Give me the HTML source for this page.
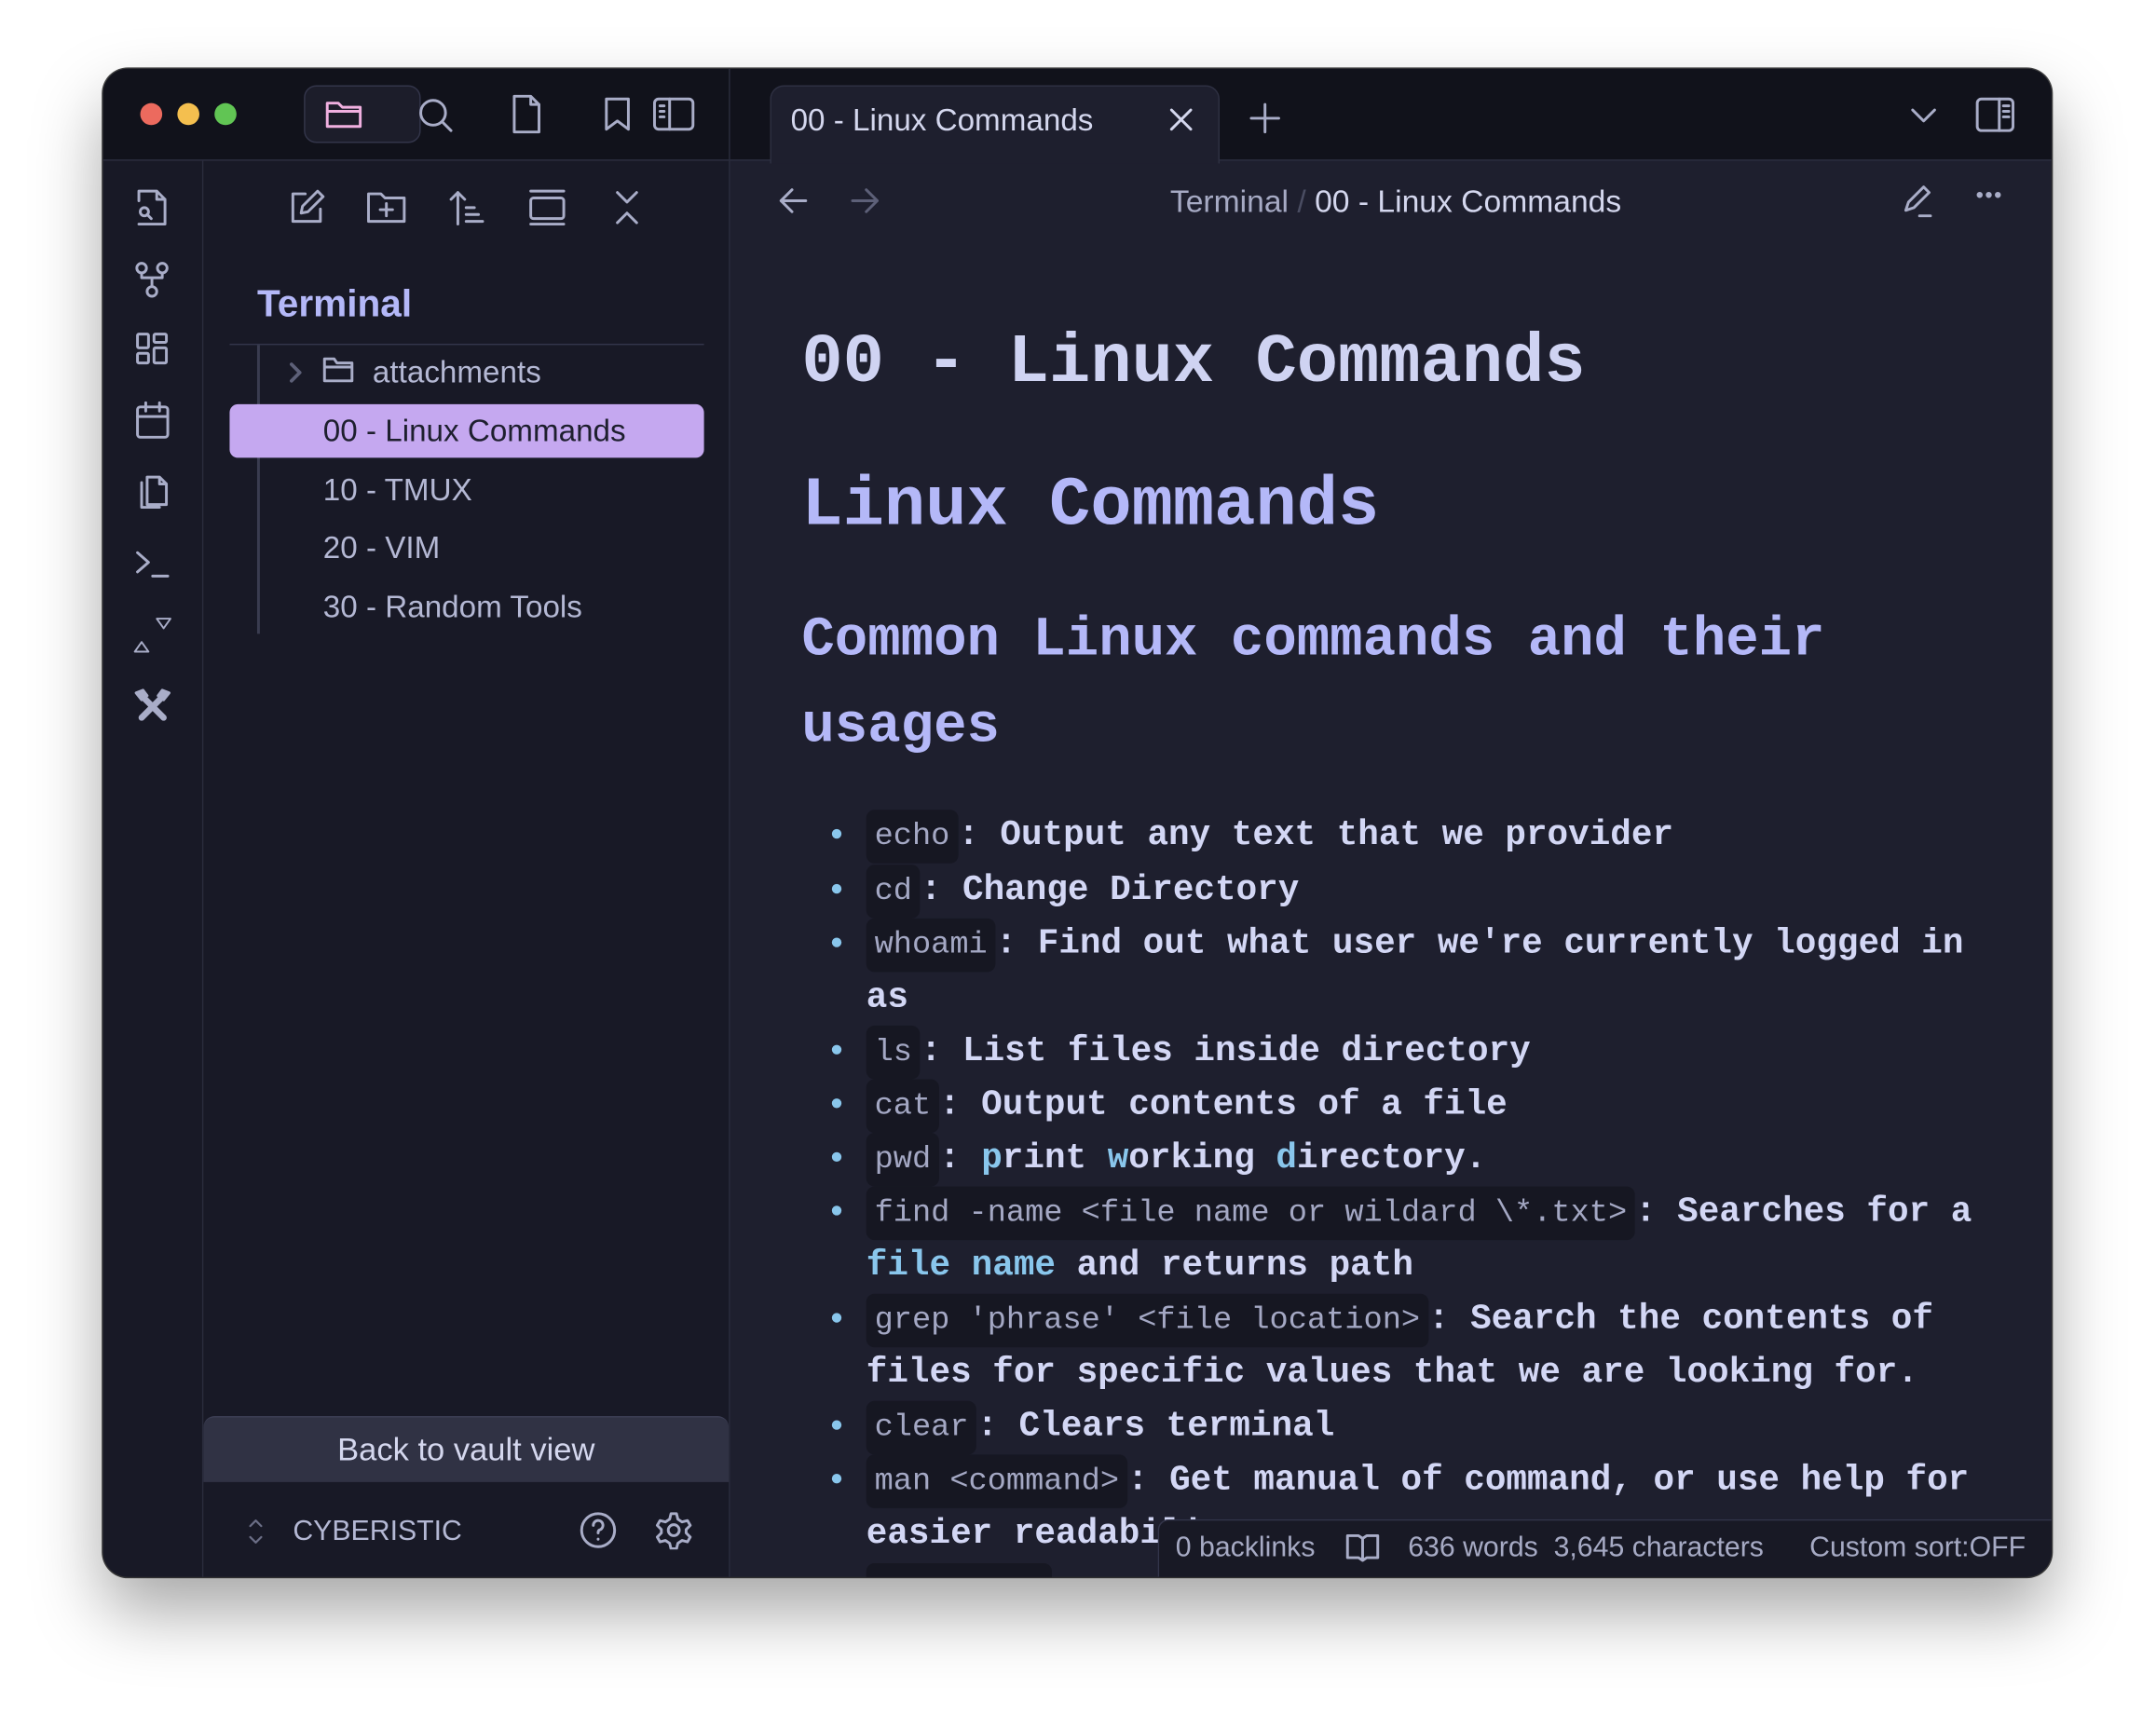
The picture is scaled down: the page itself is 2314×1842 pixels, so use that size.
<!DOCTYPE html>
<html><head><meta charset="utf-8">
<style>
html,body{margin:0;padding:0;background:#fff;width:2314px;height:1842px;overflow:hidden}
#s{position:absolute;left:0;top:0;width:1568px;height:1248px;transform:scale(1.47577);transform-origin:0 0;font-family:"Liberation Sans",sans-serif}
.a{position:absolute}
.win{left:75px;top:50px;width:1417px;height:1097px;border-radius:18px;background:#1e1f2e;overflow:hidden;box-shadow:0 25px 50px rgba(0,0,0,.35),0 0 0 1px #444;}
svg{position:absolute;fill:none;stroke:#a9adc8;stroke-width:2;stroke-linecap:round;stroke-linejoin:round}
.mono{font-family:"Liberation Mono",monospace}
.ln{position:absolute;left:630px;height:39px;line-height:39px;white-space:nowrap;font-family:"Liberation Mono",monospace;font-weight:bold;font-size:25.5px;color:#d3d7f5}
.c{font-weight:normal;font-size:22.8px;color:#a4a8c4;background:#161722;border-radius:6px;padding:0 6px;display:inline-block;line-height:39px}
.cy{color:#89c6ec}
.dot{position:absolute;left:605px;width:7px;height:7px;border-radius:50%;background:#89c6ec}
.tr{position:absolute;font-size:22.5px;color:#b4b8d4;white-space:nowrap}
</style></head><body>
<div id="s">
<div class="a win">
  <div class="a" style="left:0;top:0;width:1417px;height:66px;background:#11121b;border-bottom:1px solid #2e3042"></div>
  <div class="a" style="left:485px;top:12px;width:325px;height:56px;background:#1e1f2e;border:1px solid #2e3042;border-bottom:none;border-radius:10px 10px 0 0"></div>
  <div class="a" style="left:455px;top:0;width:1px;height:66px;background:#2a2c3c"></div>
  <div class="a" style="left:0;top:67px;width:72px;height:1030px;background:#181926;border-right:1px solid #2a2c3c"></div>
  <div class="a" style="left:73px;top:67px;width:382px;height:1030px;background:#181926;border-right:1px solid #2a2c3c"></div>
</div>
<div class="a" style="left:102px;top:75px;width:16px;height:16px;border-radius:50%;background:#ec6a5e"></div>
<div class="a" style="left:129px;top:75px;width:16px;height:16px;border-radius:50%;background:#f4bf4f"></div>
<div class="a" style="left:156px;top:75px;width:16px;height:16px;border-radius:50%;background:#61c554"></div>
<div class="a" style="left:221px;top:62px;width:85px;height:42px;border-radius:9px;background:#1c1d2a;border:1px solid #33354a;box-sizing:border-box"></div>
<svg style="left:236px;top:70px" width="28" height="26" viewBox="0 0 28 26"><path d="M2 5h8l3 3h13v14H2z M2 11h24" stroke="#f0b0e0"/></svg>
<svg style="left:303px;top:70px" width="28" height="28" viewBox="0 0 28 28"><circle cx="12" cy="12" r="9"/><path d="M19 19l6 6"/></svg>
<svg style="left:371px;top:68px" width="24" height="30" viewBox="0 0 24 30"><path d="M3 2h12l6 6v20H3z M15 2v6h6"/></svg>
<svg style="left:438px;top:70px" width="22" height="26" viewBox="0 0 22 26"><path d="M3 2h16v22l-8-6-8 6z"/></svg>
<svg style="left:474px;top:70px" width="32" height="26" viewBox="0 0 32 26"><rect x="2" y="2" width="28" height="22" rx="3"/><path d="M13 2v22 M6 7h3 M6 11h3 M6 15h3"/></svg>
<div class="a" style="left:575px;top:75px;font-size:22.5px;color:#d4d7ee">00 - Linux Commands</div>
<svg style="left:850px;top:78px" width="18" height="18" viewBox="0 0 18 18"><path d="M2 2l14 14M16 2L2 16" stroke="#d4d7ee"/></svg>
<svg style="left:908px;top:74px" width="24" height="24" viewBox="0 0 24 24"><path d="M12 2v20M2 12h20"/></svg>
<svg style="left:1389px;top:77px" width="20" height="14" viewBox="0 0 20 14"><path d="M2 3l8 8 8-8"/></svg>
<svg style="left:1436px;top:70px" width="30" height="28" viewBox="0 0 30 28"><rect x="2" y="2" width="26" height="23" rx="3"/><path d="M18 2v23 M21 7h4 M21 11h4 M21 15h4"/></svg>
<svg style="left:566px;top:136px" width="22" height="20" viewBox="0 0 22 20"><path d="M20 10H2M10 2l-8 8 8 8"/></svg>
<svg style="left:618px;top:136px" width="22" height="20" viewBox="0 0 22 20"><path d="M2 10h18M12 2l8 8-8 8" stroke="#5d6078"/></svg>
<div class="a" style="left:851px;top:133px;font-size:22.8px;color:#a6aac4;white-space:nowrap">Terminal <span style="color:#4a4d62">/</span> <span style="color:#d4d7ee">00 - Linux Commands</span></div>
<svg style="left:1382px;top:133px" width="26" height="26" viewBox="0 0 26 26"><path d="M4 20l2-6L17 3l4 4-11 11z M14 24h8"/></svg>
<div class="a" style="left:1437px;top:134px;font-size:16px;color:#a9adc8;letter-spacing:1px">•••</div>
<svg style="left:97px;top:136px" width="28" height="30" viewBox="0 0 28 30"><path d="M4 10V3h13l6 6v18H4 M17 3v6h6"/><circle cx="8" cy="18" r="3"/><path d="M10 20l3 3"/></svg>
<svg style="left:97px;top:190px" width="28" height="28" viewBox="0 0 28 28"><circle cx="6" cy="5" r="3.5"/><circle cx="21" cy="5" r="3.5"/><circle cx="13.5" cy="22" r="3.5"/><path d="M6 9v3h15V9 M13.5 12v6"/></svg>
<svg style="left:97px;top:240px" width="28" height="28" viewBox="0 0 28 28"><rect x="3" y="3" width="8" height="10" rx="1"/><rect x="15" y="3" width="9" height="6" rx="1"/><rect x="3" y="17" width="8" height="7" rx="1"/><rect x="15" y="13" width="9" height="11" rx="1"/></svg>
<svg style="left:97px;top:291px" width="28" height="30" viewBox="0 0 28 30"><rect x="3" y="5" width="22" height="22" rx="2"/><path d="M3 12h22 M9 2v6 M19 2v6"/></svg>
<svg style="left:97px;top:343px" width="28" height="30" viewBox="0 0 28 30"><path d="M10 4h9l5 5v15H10z M19 4v5h5 M6 8v18h13"/></svg>
<svg style="left:97px;top:398px" width="28" height="24" viewBox="0 0 28 24"><path d="M3 4l8 7-8 7 M14 21h11"/></svg>
<svg style="left:94px;top:446px" width="32" height="30" viewBox="0 0 32 30"><path d="M20 4h10l-5 7z M4 28h10l-5-7z" stroke-width="1.3"/></svg>
<svg style="left:97px;top:500px" width="28" height="28" viewBox="0 0 28 28"><path d="M6 6l16 16 M22 6L6 22" stroke-width="4.5" stroke="#a9adc8"/><path d="M2 4l5-2 3 4-4 3z M26 4l-5-2-3 4 4 3z" fill="#a9adc8" stroke="#a9adc8"/></svg>
<svg style="left:209px;top:137px" width="28" height="28" viewBox="0 0 28 28"><path d="M13 4H4v20h20v-9 M10 18l1-5 11-11 4 4-11 11z"/></svg>
<svg style="left:266px;top:137px" width="30" height="28" viewBox="0 0 30 28"><path d="M2 4h9l3 3h14v17H2z M15 11v9 M10.5 15.5h9"/></svg>
<svg style="left:326px;top:137px" width="28" height="28" viewBox="0 0 28 28"><path d="M7 26V3 M2 8l5-5 5 5 M13 14h6 M13 19h9 M13 24h12"/></svg>
<svg style="left:384px;top:137px" width="28" height="28" viewBox="0 0 28 28"><path d="M2 2h24 M2 26h24"/><rect x="2" y="7" width="24" height="15" rx="2"/></svg>
<svg style="left:445px;top:137px" width="22" height="28" viewBox="0 0 22 28"><path d="M4 3l7 7 7-7 M4 25l7-7 7 7"/></svg>
<div class="a" style="left:187px;top:205px;font-size:27.5px;font-weight:bold;color:#b4b8f8">Terminal</div>
<div class="a" style="left:167px;top:250px;width:345px;height:1px;background:#33354a"></div>
<div class="a" style="left:187px;top:251px;width:2px;height:210px;background:#3a3c50"></div>
<svg style="left:208px;top:262px" width="14" height="18" viewBox="0 0 14 18"><path d="M4 3l6 6-6 6" stroke="#5d6078" stroke-width="2.5"/></svg>
<svg style="left:234px;top:258px" width="24" height="22" viewBox="0 0 24 22"><path d="M2 3h7l2 3h11v13H2z M2 9h20"/></svg>
<div class="tr" style="left:271px;top:258px">attachments</div>
<div class="a" style="left:167px;top:294px;width:345px;height:39px;border-radius:6px;background:#c5a8f0"></div>
<div class="tr" style="left:235px;top:301px;color:#1e1f2e">00 - Linux Commands</div>
<div class="tr" style="left:235px;top:344px">10 - TMUX</div>
<div class="tr" style="left:235px;top:386px">20 - VIM</div>
<div class="tr" style="left:235px;top:429px">30 - Random Tools</div>
<div class="a" style="left:148px;top:1030px;width:382px;height:48px;background:#303244;border-radius:8px 8px 0 0;border-top:1px solid #3c3e54;box-sizing:border-box"></div>
<div class="a" style="left:148px;top:1041px;width:382px;text-align:center;font-size:23.4px;color:#d4d7ee">Back to vault view</div>
<svg style="left:179px;top:1103px" width="14" height="22" viewBox="0 0 14 22"><path d="M3 7l4-4 4 4 M3 15l4 4 4-4" stroke="#6a6d85" stroke-width="1.5"/></svg>
<div class="a" style="left:213px;top:1102px;font-size:20.5px;color:#b4b8d4">CYBERISTIC</div>
<svg style="left:421px;top:1099px" width="28" height="28" viewBox="0 0 28 28"><circle cx="14" cy="14" r="12"/><path d="M10.5 10.5a3.5 3.5 0 1 1 4.5 3.3c-1 .4-1 1.2-1 2.2 M14 20.5v.1"/></svg>
<svg style="left:476px;top:1099px" width="28" height="28" viewBox="0 0 28 28"><circle cx="14" cy="14" r="4"/><path d="M12 2h4l1 4 3 2 4-1 2 3.5-3 3v2.5l3 3-2 3.5-4-1-3 2-1 4h-4l-1-4-3-2-4 1-2-3.5 3-3v-2.5l-3-3L4 7l4 1 3-2z"/></svg>
<div class="a mono" style="left:583px;top:236px;font-size:50px;font-weight:bold;color:#cfd3f2;white-space:nowrap">00 - Linux Commands</div>
<div class="a mono" style="left:583px;top:340px;font-size:50px;font-weight:bold;color:#b4b8f8;white-space:nowrap">Linux Commands</div>
<div class="a mono" style="left:583px;top:435px;font-size:40px;font-weight:bold;color:#b4b8f8;white-space:nowrap;line-height:63px">Common Linux commands and their<br>usages</div>

<div class="dot" style="top:603px"></div><div class="ln" style="top:588px"><span class="c">echo</span>: Output any text that we provider</div>
<div class="dot" style="top:643px"></div><div class="ln" style="top:628px"><span class="c">cd</span>: Change Directory</div>
<div class="dot" style="top:682px"></div><div class="ln" style="top:667px"><span class="c">whoami</span>: Find out what user we're currently logged in</div>
<div class="ln" style="top:706px">as</div>
<div class="dot" style="top:760px"></div><div class="ln" style="top:745px"><span class="c">ls</span>: List files inside directory</div>
<div class="dot" style="top:799px"></div><div class="ln" style="top:784px"><span class="c">cat</span>: Output contents of a file</div>
<div class="dot" style="top:838px"></div><div class="ln" style="top:823px"><span class="c">pwd</span>: <span class="cy">p</span>rint <span class="cy">w</span>orking <span class="cy">d</span>irectory.</div>
<div class="dot" style="top:877px"></div><div class="ln" style="top:862px"><span class="c">find -name &lt;file name or wildard \*.txt&gt;</span>: Searches for a</div>
<div class="ln" style="top:901px"><span class="cy">file name</span> and returns path</div>
<div class="dot" style="top:955px"></div><div class="ln" style="top:940px"><span class="c">grep 'phrase' &lt;file location&gt;</span>: Search the contents of</div>
<div class="ln" style="top:979px">files for specific values that we are looking for.</div>
<div class="dot" style="top:1033px"></div><div class="ln" style="top:1018px"><span class="c">clear</span>: Clears terminal</div>
<div class="dot" style="top:1072px"></div><div class="ln" style="top:1057px"><span class="c">man &lt;command&gt;</span>: Get manual of command, or use help for</div>
<div class="ln" style="top:1096px">easier readability</div>
<div class="a" style="left:630px;top:1137px;width:135px;height:10px;background:#161722;border-radius:6px 6px 0 0"></div>
<div class="a" style="left:842px;top:1105px;width:650px;height:42px;background:#181925;border-top:1px solid #33354a;border-left:1px solid #33354a;border-radius:8px 0 18px 0;box-sizing:border-box"></div>
<div class="a" style="left:855px;top:1114px;font-size:20.5px;color:#a6aac4;white-space:nowrap">0 backlinks</div>
<svg style="left:978px;top:1114px" width="26" height="24" viewBox="0 0 26 24"><path d="M2 3h8l3 2 3-2h8v16h-8l-3 2-3-2H2z M13 5v16"/></svg>
<div class="a" style="left:1024px;top:1114px;font-size:20.5px;color:#a6aac4;white-space:nowrap">636 words&nbsp; 3,645 characters</div>
<div class="a" style="left:1316px;top:1114px;font-size:20.5px;color:#a6aac4;white-space:nowrap">Custom sort:OFF</div>
</div>
</body></html>
